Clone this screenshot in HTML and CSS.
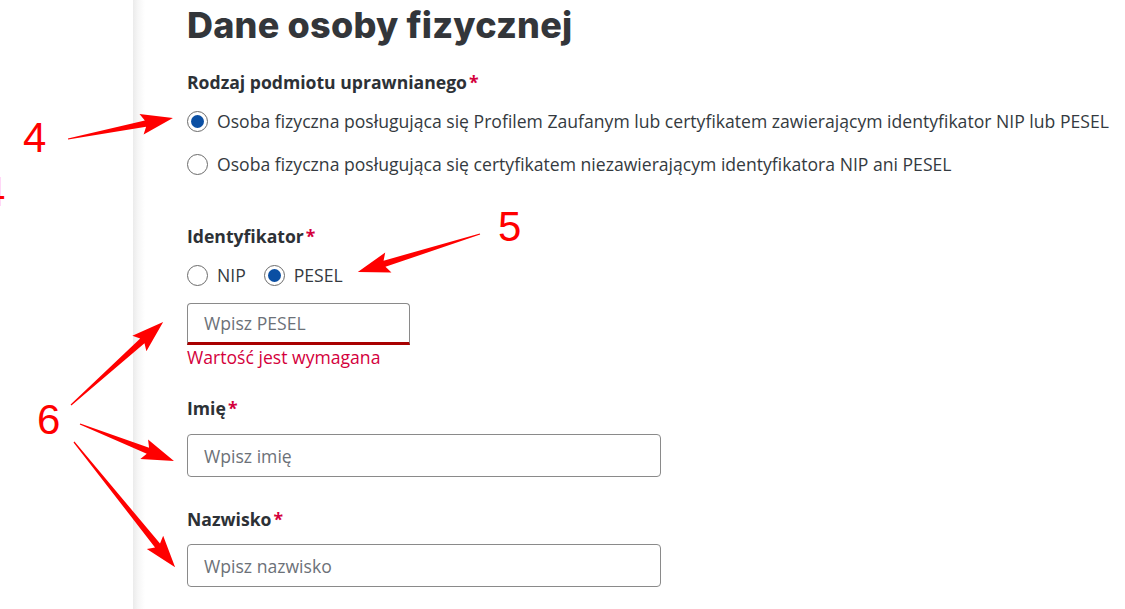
FILE: index.html
```html
<!DOCTYPE html>
<html lang="pl">
<head>
<meta charset="utf-8">
<title>Dane osoby fizycznej</title>
<link rel="stylesheet" href="styles.css">
</head>
<body>
<div class="page">
  <aside class="sidebar"></aside>
  <main class="main">
    <h1 class="title">Dane osoby fizycznej</h1>

    <fieldset class="group group-type">
      <legend class="label">Rodzaj podmiotu uprawnianego<span class="req">*</span></legend>
      <div class="radio-list">
        <label class="radio"><span class="dot checked"></span><span>Osoba fizyczna posługująca się Profilem Zaufanym lub certyfikatem zawierającym identyfikator NIP lub PESEL</span></label>
        <label class="radio"><span class="dot"></span><span>Osoba fizyczna posługująca się certyfikatem niezawierającym identyfikatora NIP ani PESEL</span></label>
      </div>
    </fieldset>

    <fieldset class="group group-id">
      <legend class="label">Identyfikator<span class="req">*</span></legend>
      <div class="radio-row">
        <label class="radio"><span class="dot"></span><span>NIP</span></label>
        <label class="radio"><span class="dot checked"></span><span>PESEL</span></label>
      </div>
      <div class="input short invalid">Wpisz PESEL</div>
      <div class="error">Wartość jest wymagana</div>
    </fieldset>

    <div class="group group-name">
      <div class="label">Imię<span class="req">*</span></div>
      <div class="input">Wpisz imię</div>
    </div>

    <div class="group group-surname">
      <div class="label">Nazwisko<span class="req">*</span></div>
      <div class="input">Wpisz nazwisko</div>
    </div>
  </main>
</div>

<div class="annotations">
  <span class="num n4">4</span>
  <span class="num n4b">4</span>
  <span class="num n5">5</span>
  <span class="num n6">6</span>
  <svg class="arrows" width="1125" height="609" viewBox="0 0 1125 609">
    <g fill="#ff0000">
      <g transform="translate(68,139) rotate(-11.3)"><polygon points="0,-0.6 79,-3.2 75,-10.5 107,0 75,10.5 79,3.2 0,0.6"/></g>
      <g transform="translate(480,234) rotate(162.7)"><polygon points="0,-0.6 100,-3.2 96,-10.5 128,0 96,10.5 100,3.2 0,0.6"/></g>
      <g transform="translate(71,405) rotate(-42)"><polygon points="0,-0.6 96,-3.2 92,-10.5 124,0 92,10.5 96,3.2 0,0.6"/></g>
      <g transform="translate(80,424) rotate(21.5)"><polygon points="0,-0.6 73,-3.2 69,-10.5 101,0 69,10.5 73,3.2 0,0.6"/></g>
      <g transform="translate(74,442) rotate(51.1)"><polygon points="0,-0.6 133,-3.2 129,-10.5 161,0 129,10.5 133,3.2 0,0.6"/></g>
    </g>
  </svg>
</div>
</body>
</html>
```

FILE: styles.css
```css
* { box-sizing: border-box; }

html, body {
  margin: 0;
  padding: 0;
  background: #ffffff;
}

body {
  width: 1125px;
  height: 609px;
  overflow: hidden;
  position: relative;
  font-family: "Open Sans", "Noto Sans", sans-serif;
  color: #343a40;
}

.page {
  display: flex;
  height: 609px;
}

.sidebar {
  width: 133px;
  flex: none;
  background: #ffffff;
}

.main {
  flex: 1;
  padding: 0 0 0 54px;
  background: linear-gradient(to right, #ebebeb 0, #f6f6f6 5px, #ffffff 12px);
}

.title {
  margin: 0;
  padding-top: 2px;
  height: 46px;
  font-family: "Inter", "Open Sans", sans-serif;
  font-weight: 800;
  font-size: 36px;
  line-height: 46px;
  color: #33363a;
  letter-spacing: 0.2px;
}

.group {
  border: 0;
  margin: 0;
  padding: 0;
  min-width: 0;
}

.label {
  display: block;
  padding: 0;
  font-weight: 700;
  font-size: 17.6px;
  line-height: 24px;
  color: #2d3136;
}

.req {
  color: #d4003c;
  margin-left: 2px;
}

.group-type { margin-top: 24px; }

.radio-list {
  display: flex;
  flex-direction: column;
  gap: 19px;
  margin-top: 15px;
}

.radio {
  display: flex;
  align-items: center;
  gap: 9px;
  font-size: 17.6px;
  line-height: 24px;
  color: #343a40;
}

.dot {
  width: 21px;
  height: 21px;
  flex: none;
  border: 1px solid #6b6b6b;
  border-radius: 50%;
  background: #fff;
  display: flex;
  align-items: center;
  justify-content: center;
}

.dot.checked::after {
  content: "";
  width: 13px;
  height: 13px;
  border-radius: 50%;
  background: #0b4fa3;
}

.group-id { margin-top: 48px; }

.radio-row {
  display: flex;
  gap: 18px;
  margin-top: 15px;
}

.input {
  margin-top: 15px;
  height: 43px;
  width: 474px;
  border: 1px solid #8a8a8a;
  border-radius: 4px;
  padding: 0 16px;
  display: flex;
  align-items: center;
  font-size: 17.6px;
  color: #6c7178;
}

.input.short {
  width: 223px;
  height: 42px;
  margin-top: 16px;
}

.input.invalid {
  border-bottom: 3px solid #a80000;
  border-radius: 4px 4px 0 0;
}

.error {
  margin-top: 0;
  font-size: 17.6px;
  line-height: 24px;
  color: #d4003c;
}

.group-name { margin-top: 27px; }
.group-name .input { margin-top: 14px; }

.group-surname { margin-top: 30px; }
.group-surname .input { margin-top: 13px; }

.annotations {
  position: absolute;
  inset: 0;
  pointer-events: none;
}

.arrows {
  position: absolute;
  left: 0;
  top: 0;
}

.num {
  position: absolute;
  font-family: "Liberation Sans", Arial, sans-serif;
  font-size: 42px;
  line-height: 42px;
  color: #ff0000;
}

.n4 { left: 23px; top: 117px; }
.n4b { left: -18px; top: 171px; }
.n5 { left: 498px; top: 206px; }
.n6 { left: 37px; top: 399px; }
```
